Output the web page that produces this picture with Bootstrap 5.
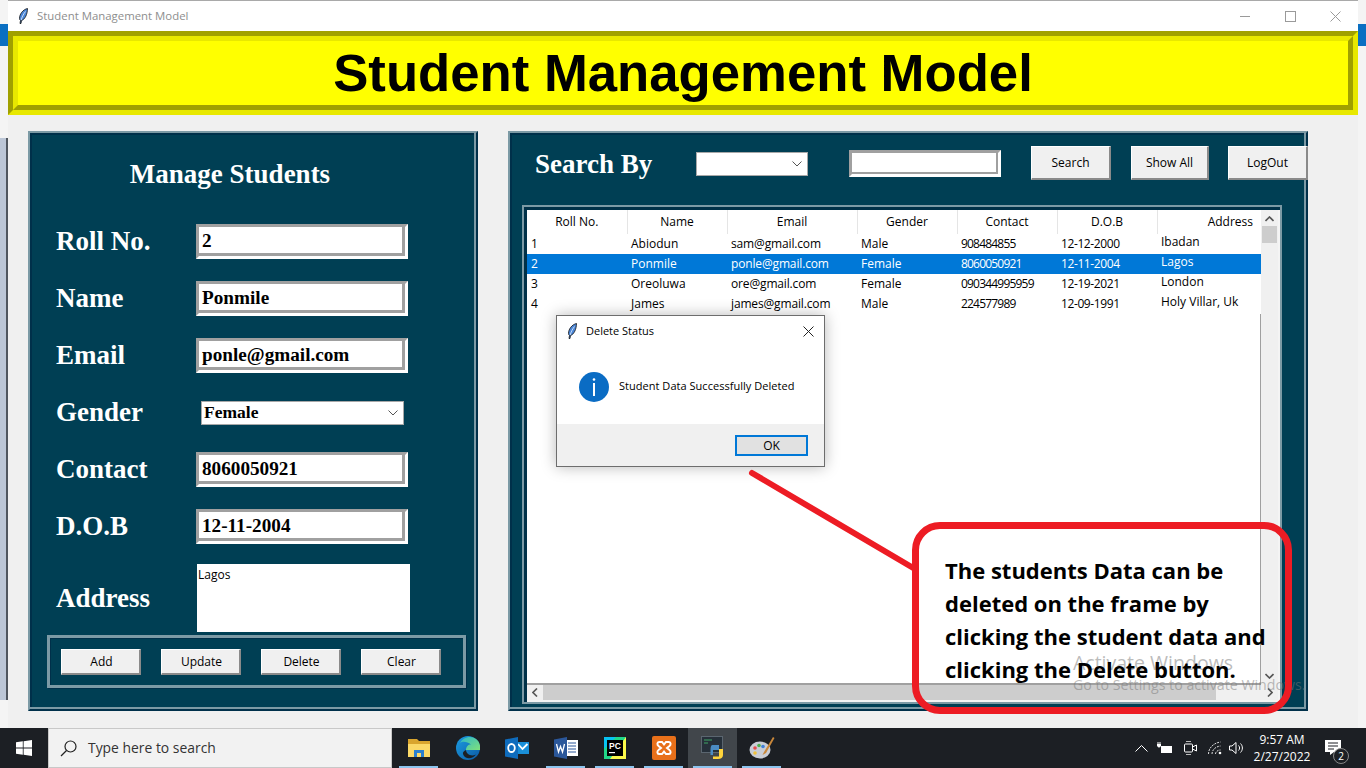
<!DOCTYPE html>
<html lang="en">
<head>
  <meta charset="UTF-8">
  <title>Student Management Model</title>
  <link href="https://cdn.jsdelivr.net/npm/bootstrap@5.3.0/dist/css/bootstrap.min.css" rel="stylesheet">
  <script src="https://cdn.jsdelivr.net/npm/bootstrap@5.3.0/dist/js/bootstrap.bundle.min.js"></script>
  <style>
    html, body { width: 1366px; height: 768px; overflow: hidden; margin: 0; }
    body { background: #f4f4f4; font-family: "Open Sans", sans-serif; position: relative; color: #000; }

    .desk-top { position: absolute; left: 0; right: 0; top: 24px; height: 22px; background: #0a6fc2; }
    .desk-side { position: absolute; left: 0; top: 138px; width: 8px; height: 562px; background: #bcc6d6; border-right: 2px solid #50565e; }

    /* main window */
    .app-win { position: absolute; left: 8px; top: 0; width: 1350px; height: 728px; background: #f0f0f0; border-top: 1px solid #a9a9a9; }
    .app-title { height: 30px; background: #fff; font-size: 11.4px; color: #8e8e8e; padding-left: 10px; }
    .title-ico { margin-right: 9px; }
    .win-ctl { width: 45px; height: 30px; }

    .head-outer { height: 84px; border: 5px solid; border-color: #a0a000 #e8e800 #e8e800 #a0a000; }
    .head-inner { height: 74px; background: #ffff00; border: 5px solid; border-color: #e8e800 #a0a000 #a0a000 #e8e800;
      font: bold 52.7px/64px "Liberation Sans", sans-serif; text-align: center; }

    .app-body { padding: 16px 50px 0 20px; gap: 30px; }
    .ridge-panel { background: #003f54; height: 580px; border: 2px solid; border-color: #7c9aa5 #00304a #00304a #7c9aa5; box-shadow: inset -2px -2px 0 #7c9aa5, inset 2px 2px 0 #00304a; }
    .left-panel { width: 450px; padding: 0 8px 0 17px; }
    .right-panel { width: 800px; }

    .serif-h { font: bold 27px/1 "Liberation Serif", serif; color: #fff; }
    .manage-h { padding: 28px 55px 0 0; height: 80px; text-align: center; }
    .form-line { height: 57px; }
    .form-lab { width: 149px; padding-left: 9px; }
    .sunk-in { width: 212px; height: 35px; background: #fff; border: 3px solid; border-color: #a0a0a0 #fff #fff #a0a0a0; box-shadow: inset -3px -3px 0 #a0a0a0; padding: 0 4px 0 3px;
      font: bold 19.2px/28px "Liberation Serif", serif; color: #000; }
    .fake-select { background: #fff; border: 1px solid #a8a8a8; position: relative; }
    .fake-select svg { position: absolute; right: 5px; top: 50%; margin-top: -3px; }
    .gender-sel { width: 203px; height: 24px; margin-left: 5px; padding-left: 2px; font: bold 17.5px/21px "Liberation Serif", serif; }
    .addr-line { height: 68px; margin-top: 9px; }
    .addr-box { width: 213px; height: 68px; background: #fff; font-size: 12px; line-height: 16px; padding: 3px 1px; margin-left: 1px; }
    .addr-lab { padding-top: 21px; }

    .btn-box { width: 419px; height: 53px; margin-top: 3px; border: 3px solid #7c9aa5; box-shadow: 1px 1px 0 #00304a, inset 1px 1px 0 #00304a; padding: 11px 0 0 11px; gap: 20px; }
    .tk-btn { background: #f0f0f0; border: 1px solid; border-width: 1px 2px 2px 1px; border-color: #fff #8a8a8a #8a8a8a #fff; color: #000; font-size: 12px; padding: 0; border-radius: 0; text-align: center; }
    .act-btn { width: 80px; height: 26px; line-height: 23px; padding-left: 2px; }

    .search-row { height: 72px; }
    .search-h { margin: 18px 0 0 25px; width: 161px; }
    .search-sel { width: 112px; height: 24px; margin-top: 19px; }
    .search-in { width: 152px; height: 27px; margin: 17px 0 0 41px; box-shadow: inset -2px -2px 0 #a0a0a0; }
    .top-btn { height: 34px; line-height: 30px; margin-top: 13px; }
    .btn-search { width: 80px; margin-right: 20px; }
    .btn-show { width: 78px; margin-right: 19px; }
    .btn-logout { width: 80px; margin-right: -2px; }

    /* treeview */
    .tree-frame { width: 760px; height: 499px; margin-left: 12px; border: 2px solid #7c9aa5; box-shadow: inset 3px 3px 0 #003148; background: #f4f4f4; padding: 3px 2px 2px 3px; }
    .tree-top { height: 475px; }
    .tree-view { width: 734px; height: 475px; background: #fff; }
    .tree-rest { border-right: 1px solid #a0a0a0; border-bottom: 2px solid #a0a0a0; }
    .tree-tbl { width: 734px; table-layout: fixed; border-collapse: collapse; font-size: 12px; color: #000; }
    .tree-tbl th { font-weight: 400; height: 24px; text-align: center; padding: 0; border-right: 1px solid #e5e5e5; }
    .tree-tbl th:last-child { border-right: 0; text-align: right; padding-right: 8px; }
    .tree-tbl td { height: 20px; padding: 0 0 0 4px; white-space: nowrap; line-height: 20px; }
    .tree-tbl td:last-child { line-height: 16px; padding-bottom: 4px; }
    .tree-tbl tr.sel-row td { background: #0078d7; color: #fff; }
    .cell-mail { letter-spacing: -.15px; }
    .cell-phone { letter-spacing: -.8px; }
    .cell-date { letter-spacing: -.4px; }
    .v-scroll { width: 17px; height: 475px; background: #f0f0f0; position: relative; }
    .v-thumb { position: absolute; left: 1px; right: 1px; top: 16px; height: 17px; background: #cdcdcd; }
    .h-scroll { height: 15px; width: 751px; background: #f0f0f0; position: relative; }
    .h-thumb { position: absolute; left: 16px; top: 0; width: 673px; height: 15px; background: #cdcdcd; }
    .sb-arrow { position: absolute; }

    /* dialog */
    .msg-win { position: absolute; left: 556px; top: 315px; width: 269px; height: 152px; background: #fff; border: 1px solid #6d6d6d; box-shadow: 0 0 14px rgba(0,0,0,.28); }
    .msg-title { height: 30px; padding-left: 10px; font-size: 11px; }
    .msg-body { height: 78px; padding: 10px 0 0 22px; gap: 10px; font-size: 11px; }
    .msg-text { margin-top: 22px; letter-spacing: .03px; }
    .msg-foot { height: 42px; background: #f0f0f0; padding: 11px 16px 0 0; }
    .ok-btn { width: 73px; height: 21px; background: #e1e1e1; border: 2px solid #0078d7; font-size: 12px; line-height: 16px; padding: 0; border-radius: 0; color: #000; }

    /* callout */
    .call-arrow { position: absolute; left: 745px; top: 468px; }
    .call-box { position: absolute; left: 912px; top: 522px; width: 380px; height: 192px; border: 7px solid #ed1c24; border-radius: 28px; padding: 25px 0 0 26px; font: 700 22px/33px "Open Sans", sans-serif; color: #000; }
    .activate-txt { position: absolute; left: 1073px; top: 651px; color: rgba(120,120,120,.5); font-size: 19.5px; line-height: 24px; }
    .activate-sub { position: absolute; left: 1073px; top: 676px; color: rgba(120,120,120,.5); font-size: 14.2px; line-height: 18px; }

    /* taskbar */
    .task-bar { position: absolute; left: 0; right: 0; bottom: 0; height: 40px; background: #1c1f24; color: #fff; }
    .start-tile { width: 48px; }
    .search-task { width: 344px; height: 40px; background: #f2f2f2; color: #333; font-size: 13.9px; padding: 1px 0 0 11px; gap: 11px; border: 1px solid #c8c8c8; }
    .task-ico { width: 49px; height: 40px; position: relative; }
    .task-ico.is-open::after { content: ""; position: absolute; left: 5px; right: 5px; bottom: 0; height: 2px; background: #8cc4ee; }
    .task-ico.is-cur { background: #41464b; }
    .tray-zone { margin-left: auto; padding-right: 19px; font-size: 12px; }
    .tr-a { margin-left: 9px; }
    .tr-b { margin-left: 11px; }
    .tr-c { margin-left: 6px; }
    .tray-clock { text-align: center; line-height: 17px; width: 64px; margin: 0 11px 0 5px; }
    .note-wrap { position: relative; width: 22px; height: 26px; }
    .note-wrap svg { display: block; margin-top: 5px; }
    .note-num { position: absolute; right: -2px; bottom: -3px; width: 16px; height: 16px; border-radius: 50%; background: #1c1f24; border: 1px solid #888; font-size: 10px; line-height: 14px; text-align: center; }
  </style>
</head>
<body>
<div class="desk-top"></div>
<div class="desk-side"></div>

<div class="app-win">
  <div class="app-title d-flex align-items-center">
    <svg width="10" height="16" viewBox="0 0 10 16" class="title-ico"><path d="M9.5 .5C5 1.500 1.500 6 1.500 10.500 1.500 11.500 2 12 2.500 12.500L2 15.500H3L3.500 12.500C7 11.500 9.500 6 9.500 .5Z" fill="#4a86d8" stroke="#111" stroke-width=".8"/><path d="M7.500 3.500C5.500 6 4 9 3.200 12" stroke="#fff" stroke-width=".7" fill="none"/></svg>
    <span>Student Management Model</span>
    <div class="ms-auto d-flex">
      <div class="win-ctl d-flex align-items-center justify-content-center"><svg width="11" height="11" viewBox="0 0 11 11"><path d="M0 5.500H10" stroke="#9a9a9a"/></svg></div>
      <div class="win-ctl d-flex align-items-center justify-content-center"><svg width="11" height="11" viewBox="0 0 11 11"><rect x=".5" y=".5" width="10" height="10" fill="none" stroke="#9a9a9a"/></svg></div>
      <div class="win-ctl d-flex align-items-center justify-content-center"><svg width="11" height="11" viewBox="0 0 11 11"><path d="M.5 .5L10.500 10.500M10.500 .5L.5 10.500" stroke="#9a9a9a"/></svg></div>
    </div>
  </div>

  <div class="head-outer"><div class="head-inner">Student Management Model</div></div>

  <div class="app-body d-flex">
    <!-- Manage students -->
    <div class="ridge-panel left-panel">
      <div class="serif-h manage-h">Manage Students</div>
      <div class="form-line d-flex align-items-center"><div class="serif-h form-lab">Roll No.</div><div class="sunk-in">2</div></div>
      <div class="form-line d-flex align-items-center"><div class="serif-h form-lab">Name</div><div class="sunk-in">Ponmile</div></div>
      <div class="form-line d-flex align-items-center"><div class="serif-h form-lab">Email</div><div class="sunk-in">ponle@gmail.com</div></div>
      <div class="form-line d-flex align-items-center"><div class="serif-h form-lab">Gender</div>
        <div class="fake-select gender-sel">Female<svg width="10" height="6" viewBox="0 0 10 6"><path d="M.5 .5L5 5 9.500 .5" fill="none" stroke="#555"/></svg></div></div>
      <div class="form-line d-flex align-items-center"><div class="serif-h form-lab">Contact</div><div class="sunk-in">8060050921</div></div>
      <div class="form-line d-flex align-items-center"><div class="serif-h form-lab">D.O.B</div><div class="sunk-in">12-11-2004</div></div>
      <div class="addr-line d-flex"><div class="serif-h form-lab addr-lab">Address</div><div class="addr-box">Lagos</div></div>
      <div class="btn-box d-flex">
        <button class="tk-btn act-btn">Add</button>
        <button class="tk-btn act-btn">Update</button>
        <button class="tk-btn act-btn">Delete</button>
        <button class="tk-btn act-btn">Clear</button>
      </div>
    </div>

    <!-- Student list -->
    <div class="ridge-panel right-panel">
      <div class="search-row d-flex align-items-start">
        <div class="serif-h search-h">Search By</div>
        <div class="fake-select search-sel"><svg width="10" height="6" viewBox="0 0 10 6"><path d="M.5 .5L5 5 9.500 .5" fill="none" stroke="#555"/></svg></div>
        <div class="sunk-in search-in"></div>
        <button class="tk-btn top-btn btn-search ms-auto">Search</button>
        <button class="tk-btn top-btn btn-show">Show All</button>
        <button class="tk-btn top-btn btn-logout">LogOut</button>
      </div>
      <div class="tree-frame">
        <div class="tree-top d-flex">
          <div class="tree-view d-flex flex-column">
            <table class="tree-tbl">
              <colgroup><col style="width:100px"><col style="width:100px"><col style="width:130px"><col style="width:100px"><col style="width:100px"><col style="width:100px"><col style="width:104px"></colgroup>
              <thead><tr><th>Roll No.</th><th>Name</th><th>Email</th><th>Gender</th><th>Contact</th><th>D.O.B</th><th>Address</th></tr></thead>
              <tbody>
                <tr><td>1</td><td>Abiodun</td><td class="cell-mail">sam@gmail.com</td><td>Male</td><td class="cell-phone">908484855</td><td class="cell-date">12-12-2000</td><td>Ibadan</td></tr>
                <tr class="sel-row"><td>2</td><td>Ponmile</td><td class="cell-mail">ponle@gmail.com</td><td>Female</td><td class="cell-phone">8060050921</td><td class="cell-date">12-11-2004</td><td>Lagos</td></tr>
                <tr><td>3</td><td>Oreoluwa</td><td class="cell-mail">ore@gmail.com</td><td>Female</td><td class="cell-phone">090344995959</td><td class="cell-date">12-19-2021</td><td>London</td></tr>
                <tr><td>4</td><td>James</td><td class="cell-mail">james@gmail.com</td><td>Male</td><td class="cell-phone">224577989</td><td class="cell-date">12-09-1991</td><td>Holy Villar, Uk</td></tr>
              </tbody>
            </table>
            <div class="tree-rest flex-grow-1"></div>
          </div>
          <div class="v-scroll">
            <svg class="sb-arrow" style="left:4px;top:6px" width="9" height="6" viewBox="0 0 9 6"><path d="M.5 5L4.500 1 8.500 5" fill="none" stroke="#555" stroke-width="1.600"/></svg>
            <div class="v-thumb"></div>
            <svg class="sb-arrow" style="left:4px;bottom:6px" width="9" height="6" viewBox="0 0 9 6"><path d="M.5 1L4.500 5 8.500 1" fill="none" stroke="#555" stroke-width="1.600"/></svg>
          </div>
        </div>
        <div class="h-scroll">
          <svg class="sb-arrow" style="left:5px;top:3px" width="6" height="9" viewBox="0 0 6 9"><path d="M5 .5L1 4.500 5 8.500" fill="none" stroke="#555" stroke-width="1.600"/></svg>
          <div class="h-thumb"></div>
          <svg class="sb-arrow" style="right:5px;top:3px" width="6" height="9" viewBox="0 0 6 9"><path d="M1 .5L5 4.500 1 8.500" fill="none" stroke="#555" stroke-width="1.600"/></svg>
        </div>
      </div>
    </div>
  </div>
</div>

<!-- delete message box -->
<div class="msg-win">
  <div class="msg-title d-flex align-items-center">
    <svg width="10" height="16" viewBox="0 0 10 16" class="title-ico"><path d="M9.5 .5C5 1.500 1.500 6 1.500 10.500 1.500 11.500 2 12 2.500 12.500L2 15.500H3L3.500 12.500C7 11.500 9.500 6 9.500 .5Z" fill="#4a86d8" stroke="#111" stroke-width=".8"/><path d="M7.500 3.500C5.500 6 4 9 3.200 12" stroke="#fff" stroke-width=".7" fill="none"/></svg>
    <span>Delete Status</span>
    <svg class="ms-auto" style="margin-right:10px" width="11" height="11" viewBox="0 0 11 11"><path d="M.5 .5L10.500 10.500M10.500 .5L.5 10.500" stroke="#222"/></svg>
  </div>
  <div class="msg-body d-flex align-items-start">
    <svg width="30" height="30" viewBox="0 0 30 30" class="mt-3"><circle cx="15" cy="15" r="15" fill="#0a6cc4"/><circle cx="15" cy="7.500" r="1.300" fill="#fff"/><rect x="14" y="11" width="2" height="13" fill="#fff"/></svg>
    <span class="msg-text">Student Data Successfully Deleted</span>
  </div>
  <div class="msg-foot d-flex justify-content-end"><button class="ok-btn">OK</button></div>
</div>

<svg class="call-arrow" width="175" height="108" viewBox="0 0 175 108"><path d="M7 5L170 101" stroke="#ed1c24" stroke-width="6" stroke-linecap="round" fill="none"/></svg>
<div class="activate-txt">Activate Windows</div>
<div class="activate-sub">Go to Settings to activate Windows.</div>
<div class="call-box">The students Data can be<br>deleted on the frame by<br>clicking the student data and<br>clicking the Delete button.</div>

<!-- windows taskbar -->
<div class="task-bar d-flex">
  <div class="start-tile d-flex align-items-center justify-content-center">
    <svg width="16" height="16" viewBox="0 0 16 16"><path d="M0 2.300L6.800 1.300V7.600H0ZM7.600 1.200L16 0V7.600H7.600ZM0 8.400H6.800V14.700L0 13.700ZM7.600 8.400H16V16L7.600 14.800Z" fill="#fff"/></svg>
  </div>
  <div class="search-task d-flex align-items-center">
    <svg width="17" height="17" viewBox="0 0 17 17"><circle cx="10.500" cy="6.500" r="5.500" fill="none" stroke="#222" stroke-width="1.200"/><path d="M6.500 10.500L1 16" stroke="#222" stroke-width="1.300"/></svg>
    <span>Type here to search</span>
  </div>
  <div class="d-flex" style="margin-left:2px">
    <div class="task-ico is-open d-flex align-items-center justify-content-center">
      <svg width="22" height="20" viewBox="0 0 22 20"><path d="M0 1H9L11 3H22V18H0Z" fill="#d9a52e"/><rect y="6" width="22" height="13" fill="#fbd968"/><path d="M6 19V12H16V19H13V15H9V19Z" fill="#2a7fcf"/></svg>
    </div>
    <div class="task-ico d-flex align-items-center justify-content-center">
      <svg width="24" height="24" viewBox="0 0 24 24"><defs><linearGradient id="edgeGr" x1="0" y1="0" x2="1" y2="1"><stop offset="0" stop-color="#1b9de2"/><stop offset="1" stop-color="#0c59a4"/></linearGradient><linearGradient id="edgeGn" x1="0" y1="0" x2="1" y2="1"><stop offset="0" stop-color="#2fb8c9"/><stop offset="1" stop-color="#7fe07b"/></linearGradient></defs><circle cx="12" cy="12" r="12" fill="url(#edgeGr)"/><path d="M4 7C7 1 15 -1 20 3 24 6 24.500 10 24 14H10C10 10 13 8 15 8.500 11 5 6 5 4 7Z" fill="url(#edgeGn)"/><path d="M10 14C10 18 15 21 20 18.500 17 23 9 24 7 18 6.500 16 8 15 10 14Z" fill="#1c1f24"/></svg>
    </div>
    <div class="task-ico d-flex align-items-center justify-content-center">
      <svg width="24" height="22" viewBox="0 0 24 22"><rect x="9" y="5" width="15" height="12" fill="#1a8fd8"/><path d="M13 7L17.500 12 22.500 7" fill="none" stroke="#fff" stroke-width="1.800"/><path d="M0 2.500L13 0V22L0 19.500Z" fill="#0f6cbd"/><ellipse cx="6.500" cy="11" rx="3.300" ry="4" fill="none" stroke="#fff" stroke-width="1.800"/></svg>
    </div>
    <div class="task-ico is-open d-flex align-items-center justify-content-center">
      <svg width="24" height="22" viewBox="0 0 24 22"><rect x="9" y="3" width="15" height="16" fill="#fff"/><path d="M14 6H22M14 9H22M14 12H22M14 15H22" stroke="#2b579a"/><path d="M0 2.500L13 0V22L0 19.500Z" fill="#2b579a"/><path d="M2.500 7L4.500 15 6.500 9.500 8.500 15 10.500 7" fill="none" stroke="#fff" stroke-width="1.300"/></svg>
    </div>
    <div class="task-ico is-open d-flex align-items-center justify-content-center">
      <svg width="22" height="22" viewBox="0 0 22 22"><rect width="22" height="22" fill="#21d789"/><path d="M22 0V22H6Z" fill="#fcf84a"/><path d="M0 0H12L0 12Z" fill="#07c3f2"/><rect x="3" y="3" width="16" height="16" fill="#000"/><text x="5" y="11.500" fill="#fff" font-size="8.500" font-weight="700" font-family="Liberation Sans">PC</text><rect x="5" y="15" width="6" height="1.200" fill="#fff"/></svg>
    </div>
    <div class="task-ico is-open d-flex align-items-center justify-content-center">
      <svg width="24" height="24" viewBox="0 0 24 24"><rect width="24" height="24" rx="2" fill="#e8701a"/><path d="M7 6H10L12 8.500 14 6H17C19 6 19 9 17.500 10L15 12 17.500 14C19 15 19 18 17 18H14L12 15.500 10 18H7C5 18 5 15 6.500 14L9 12 6.500 10C5 9 5 6 7 6Z" fill="none" stroke="#fff" stroke-width="2"/></svg>
    </div>
    <div class="task-ico is-open is-cur d-flex align-items-center justify-content-center">
      <svg width="24" height="24" viewBox="0 0 24 24"><rect x=".5" y=".5" width="21" height="16" fill="#26303a" stroke="#5b6670"/><path d="M3 4H11M3 7H7" stroke="#3fa564"/><path d="M17 23H12V20.500H18V13H22V19C22 21.500 20 23 17 23Z" fill="#ffd43b"/><path d="M11.500 9H18V14H12V19H9.500V14C9.500 11 10 9 11.500 9Z" fill="#4a8cc4"/></svg>
    </div>
    <div class="task-ico is-open d-flex align-items-center justify-content-center">
      <svg width="26" height="24" viewBox="0 0 26 24"><ellipse cx="11" cy="14" rx="10.500" ry="8.500" fill="#c9cdd6"/><circle cx="6" cy="12" r="1.800" fill="#e34b4b"/><circle cx="10" cy="9.500" r="1.800" fill="#4bb04f"/><circle cx="14" cy="10.500" r="1.800" fill="#3f7fd8"/><circle cx="6" cy="17" r="1.800" fill="#efc23c"/><path d="M24 1L15 16 13.500 19 17 17 25.500 2Z" fill="#c9873a"/></svg>
    </div>
  </div>
  <div class="tray-zone d-flex align-items-center">
    <svg width="13" height="8" viewBox="0 0 13 8"><path d="M.5 7.500L6.500 1.500 12.500 7.500" fill="none" stroke="#fff"/></svg>
    <svg class="tr-a" width="16" height="12" viewBox="0 0 16 12"><path d="M1 0V2M3 0V2" stroke="#fff"/><path d="M0 2H4V4L2.500 5.500H1.500L0 4Z" fill="#fff"/><rect x="4" y="4" width="11" height="7" fill="#fff"/></svg>
    <svg class="tr-b" width="13" height="16" viewBox="0 0 13 16"><path d="M2 1.500H7M2 14.500H7" stroke="#bbb"/><rect x=".5" y="4" width="8" height="8" rx="1" fill="none" stroke="#fff"/><path d="M8.500 7L12.500 5V11L8.500 9" fill="none" stroke="#fff"/></svg>
    <svg class="tr-b" width="15" height="14" viewBox="0 0 15 14"><path d="M.5 13C.5 7 5.500 2 12.500 1M4 13C4 9 7.500 5.500 12.500 5M7.500 13C7.500 11 9.500 9 12.500 9" fill="none" stroke="#ddd" stroke-dasharray="2 1"/><circle cx="12" cy="12" r="1.300" fill="#fff"/></svg>
    <svg class="tr-c" width="16" height="14" viewBox="0 0 16 14"><path d="M.5 5H3L7 1.500V12.500L3 9H.5Z" fill="none" stroke="#fff"/><path d="M9.500 4.500C11 6 11 8 9.500 9.500M11.500 2.500C14 5 14 9 11.500 11.500" fill="none" stroke="#fff"/></svg>
    <div class="tray-clock"><div>9:57 AM</div><div>2/27/2022</div></div>
    <div class="note-wrap">
      <svg width="17" height="15" viewBox="0 0 17 15"><path d="M0 0H16V12H9L5 15V12H0Z" fill="#fff"/><path d="M3 3H13M3 6H13M3 9H9" stroke="#1c1f24"/></svg>
      <div class="note-num">2</div>
    </div>
  </div>
</div>
</body>
</html>
